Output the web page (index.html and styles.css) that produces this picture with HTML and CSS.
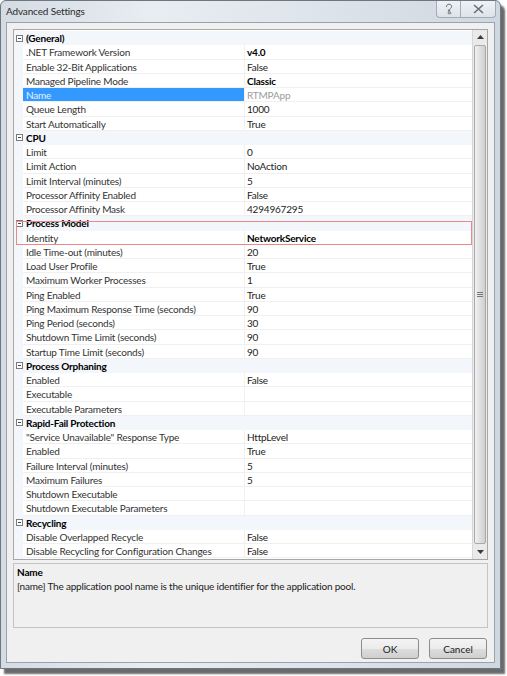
FILE: index.html
```html
<!DOCTYPE html>
<html>
<head>
<meta charset="utf-8">
<link rel="stylesheet" href="styles.css">
</head>
<body>
<div class="window">
  <div class="titlebar">
    <span class="title">Advanced Settings</span>
    <div class="caption-btns">
      <div class="cap help"><svg width="10" height="12" viewBox="0 0 10 12"><path d="M2.5 4 C2.5 2 3.5 1.2 5 1.2 C6.6 1.2 7.6 2.2 7.6 3.6 C7.6 5 6 5.5 5.6 6.6 L5.6 8.2 L4.4 8.2 L4.4 6.6" fill="none" stroke="#66707a" stroke-width="1"/><path d="M4.2 9.2 h2.6 v1.6 h-2.6 z" fill="none" stroke="#66707a" stroke-width="0.8"/></svg></div>
      <div class="cap close"><svg width="11" height="10" viewBox="0 0 11 10"><path d="M1 1 L10 9 M10 1 L1 9" stroke="#66707a" stroke-width="1.6" fill="none"/></svg></div>
    </div>
  </div>
  <div class="client">
    <div class="grid">
      <div class="rows">
        <div class="cat"><span class="tg"><i></i></span>(General)</div>
        <div class="row"><span class="g"></span><span class="n">.NET Framework Version</span><span class="v b">v4.0</span></div>
        <div class="row"><span class="g"></span><span class="n">Enable 32-Bit Applications</span><span class="v">False</span></div>
        <div class="row"><span class="g"></span><span class="n">Managed Pipeline Mode</span><span class="v b">Classic</span></div>
        <div class="row sel"><span class="g"></span><span class="n">Name</span><span class="v ro">RTMPApp</span></div>
        <div class="row"><span class="g"></span><span class="n">Queue Length</span><span class="v">1000</span></div>
        <div class="row"><span class="g"></span><span class="n">Start Automatically</span><span class="v">True</span></div>
        <div class="cat"><span class="tg"><i></i></span>CPU</div>
        <div class="row"><span class="g"></span><span class="n">Limit</span><span class="v">0</span></div>
        <div class="row"><span class="g"></span><span class="n">Limit Action</span><span class="v">NoAction</span></div>
        <div class="row"><span class="g"></span><span class="n">Limit Interval (minutes)</span><span class="v">5</span></div>
        <div class="row"><span class="g"></span><span class="n">Processor Affinity Enabled</span><span class="v">False</span></div>
        <div class="row"><span class="g"></span><span class="n">Processor Affinity Mask</span><span class="v">4294967295</span></div>
        <div class="cat"><span class="tg"><i></i></span>Process Model</div>
        <div class="row"><span class="g"></span><span class="n">Identity</span><span class="v b">NetworkService</span></div>
        <div class="row"><span class="g"></span><span class="n">Idle Time-out (minutes)</span><span class="v">20</span></div>
        <div class="row"><span class="g"></span><span class="n">Load User Profile</span><span class="v">True</span></div>
        <div class="row"><span class="g"></span><span class="n">Maximum Worker Processes</span><span class="v">1</span></div>
        <div class="row"><span class="g"></span><span class="n">Ping Enabled</span><span class="v">True</span></div>
        <div class="row"><span class="g"></span><span class="n">Ping Maximum Response Time (seconds)</span><span class="v">90</span></div>
        <div class="row"><span class="g"></span><span class="n">Ping Period (seconds)</span><span class="v">30</span></div>
        <div class="row"><span class="g"></span><span class="n">Shutdown Time Limit (seconds)</span><span class="v">90</span></div>
        <div class="row"><span class="g"></span><span class="n">Startup Time Limit (seconds)</span><span class="v">90</span></div>
        <div class="cat"><span class="tg"><i></i></span>Process Orphaning</div>
        <div class="row"><span class="g"></span><span class="n">Enabled</span><span class="v">False</span></div>
        <div class="row"><span class="g"></span><span class="n">Executable</span><span class="v"></span></div>
        <div class="row"><span class="g"></span><span class="n">Executable Parameters</span><span class="v"></span></div>
        <div class="cat"><span class="tg"><i></i></span>Rapid-Fail Protection</div>
        <div class="row"><span class="g"></span><span class="n">"Service Unavailable" Response Type</span><span class="v">HttpLevel</span></div>
        <div class="row"><span class="g"></span><span class="n">Enabled</span><span class="v">True</span></div>
        <div class="row"><span class="g"></span><span class="n">Failure Interval (minutes)</span><span class="v">5</span></div>
        <div class="row"><span class="g"></span><span class="n">Maximum Failures</span><span class="v">5</span></div>
        <div class="row"><span class="g"></span><span class="n">Shutdown Executable</span><span class="v"></span></div>
        <div class="row"><span class="g"></span><span class="n">Shutdown Executable Parameters</span><span class="v"></span></div>
        <div class="cat"><span class="tg"><i></i></span>Recycling</div>
        <div class="row"><span class="g"></span><span class="n">Disable Overlapped Recycle</span><span class="v">False</span></div>
        <div class="row"><span class="g"></span><span class="n">Disable Recycling for Configuration Changes</span><span class="v">False</span></div>
        <div class="redbox"></div>
      </div>
      <div class="scrollbar">
        <div class="arrow"><svg width="7" height="4" viewBox="0 0 7 4"><path d="M0 4 L3.5 0 L7 4 Z" fill="#3c3c3c"/></svg></div>
        <div class="track"><div class="thumb"><div class="grip"></div></div></div>
        <div class="arrow"><svg width="7" height="4" viewBox="0 0 7 4"><path d="M0 0 L3.5 4 L7 0 Z" fill="#3c3c3c"/></svg></div>
      </div>
    </div>
    <div class="desc">
      <div class="desc-title">Name</div>
      <div class="desc-text">[name] The application pool name is the unique identifier for the application pool.</div>
    </div>
    <div class="buttons">
      <button class="btn">OK</button>
      <button class="btn">Cancel</button>
    </div>
  </div>
</div>
</body>
</html>
```
FILE: styles.css
```css
html, body {
  margin: 0;
  padding: 0;
  background: #ffffff;
}
body {
  width: 507px;
  height: 676px;
  overflow: hidden;
  font-family: Lato, "Open Sans", sans-serif;
  font-size: 10px;
  letter-spacing: -0.2px;
  color: #1e1e1e;
}
.window {
  width: 501px;
  height: 669px;
  border: 1px solid #6e7780;
  border-radius: 6px 6px 0 0;
  background: linear-gradient(90deg, #d4dbe3 0%, #e8edf2 30%, #dfe5ec 60%, #cfd7e0 100%);
  box-shadow: 4px 5px 2px #6a6a6a;
  display: flex;
  flex-direction: column;
  box-sizing: border-box;
  padding: 0 5px 5px 5px;
}
.titlebar {
  height: 21px;
  display: flex;
  align-items: flex-start;
  justify-content: space-between;
  flex-shrink: 0;
}
.title {
  font-size: 10px;
  letter-spacing: -0.15px;
  color: #2a2a2a;
  padding-top: 4px;
  padding-left: 0;
}
.caption-btns {
  display: flex;
  margin-right: -1px;
}
.cap {
  height: 17px;
  border: 1px solid #a3abb4;
  border-top: none;
  background: linear-gradient(#eef2f6, #dde3ea);
  display: flex;
  align-items: center;
  justify-content: center;
  box-sizing: border-box;
}
.help {
  width: 24px;
  border-radius: 0 0 0 4px;
  border-right: none;
}
.close {
  width: 36px;
  border-radius: 0 0 4px 0;
}
.client {
  flex: 1;
  background: #f0f0f0;
  border: 1px solid #9aa3ad;
  display: flex;
  flex-direction: column;
  padding: 6px 6px 0 6px;
  box-sizing: border-box;
}
.grid {
  height: 531px;
  border: 1px solid #a7a7a7;
  background: #ffffff;
  display: flex;
  box-sizing: border-box;
}
.rows {
  flex: 1;
  position: relative;
  padding-top: 1px;
  background: linear-gradient(90deg, #f3f6fb 0 9px, #ffffff 9px);
}
.row, .cat {
  height: 14.25px;
  line-height: 14px;
  display: flex;
  white-space: nowrap;
  overflow: hidden;
}
.cat {
  background: #f3f6fb;
  font-weight: bold;
  color: #000;
}
.tg {
  width: 12px;
  flex-shrink: 0;
  display: flex;
  align-items: center;
  padding-left: 2px;
  box-sizing: border-box;
}
.tg i {
  width: 7px;
  height: 7px;
  border: 1px solid #7a7a7a;
  box-sizing: border-box;
  background: linear-gradient(#444, #444) center / 3px 1px no-repeat, #fff;
}
.g {
  width: 9px;
  flex-shrink: 0;
  background: #f3f6fb;
}
.n {
  width: 222px;
  padding-left: 3px;
  box-sizing: border-box;
  border-right: 1px solid #f0f0f0;
  border-bottom: 1px solid #f0f0f0;
  flex-shrink: 0;
  color: #333;
}
.v {
  flex: 1;
  padding-left: 2px;
  border-bottom: 1px solid #f0f0f0;
  color: #222;
}
.b {
  font-weight: bold;
  color: #000;
}
.ro {
  color: #9a9a9a;
}
.sel .n {
  background: #3399ff;
  color: #e6f0ff;
}
.redbox {
  position: absolute;
  left: 2px;
  top: 191px;
  width: 456px;
  height: 24px;
  border: 1px solid #e88a8a;
  box-sizing: border-box;
}
.scrollbar {
  width: 14px;
  display: flex;
  flex-direction: column;
  background: #eaeaea;
  border-left: 1px solid #d8d8d8;
}
.arrow {
  height: 14px;
  display: flex;
  align-items: center;
  justify-content: center;
  flex-shrink: 0;
}
.track {
  flex: 1;
  padding: 1px 1px;
  display: flex;
}
.thumb {
  flex: 1;
  border: 1px solid #a9a9a9;
  border-radius: 2px;
  background: linear-gradient(90deg, #f2f2f2, #dcdcdc 60%, #cfcfcf);
  display: flex;
  align-items: center;
  justify-content: center;
}
.grip {
  width: 6px;
  height: 5px;
  background: repeating-linear-gradient(#777 0 1px, transparent 1px 2px);
}
.desc {
  margin-top: 3px;
  height: 65px;
  border: 1px solid #c4c4c4;
  box-sizing: border-box;
  padding: 1px 3px;
  color: #222;
}
.desc-title {
  font-weight: bold;
  color: #000;
  line-height: 14px;
}
.desc-text {
  line-height: 14px;
}
.buttons {
  display: flex;
  justify-content: flex-end;
  gap: 10px;
  margin-top: 10px;
  padding-right: 1px;
}
.btn {
  width: 58px;
  height: 21px;
  border: 1px solid #8c8c8c;
  border-radius: 3px;
  background: linear-gradient(#f4f4f4 0%, #ebebeb 50%, #dddddd 51%, #cfcfcf 100%);
  font-family: Lato, "Open Sans", sans-serif;
  font-size: 10px;
  color: #222;
  padding: 0;
}
```
